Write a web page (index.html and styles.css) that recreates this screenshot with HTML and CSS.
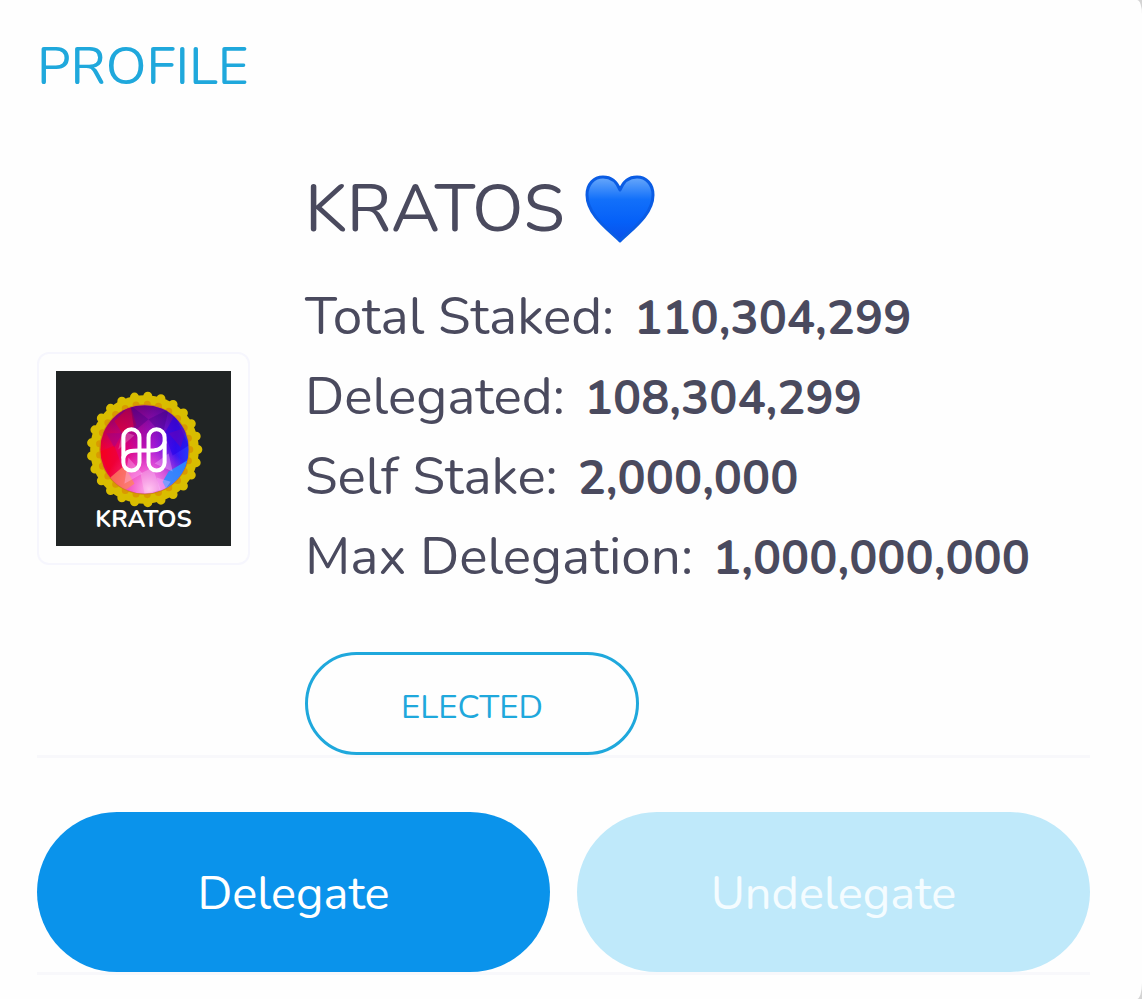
FILE: index.html
```html
<!DOCTYPE html>
<html lang="en">
<head>
    <meta charset="UTF-8">
    <meta name="viewport" content="width=device-width, initial-scale=1.0">
    <title>Validator Profile</title>
    <link rel="stylesheet" href="styles.css">
</head>
<body>
    <main class="card">
        <h2 class="card-title">PROFILE</h2>

        <section class="profile">
            <div class="avatar">
                <svg viewBox="0 0 174 174" role="img" aria-label="KRATOS logo">
                    <defs>
                        <linearGradient id="disc" x1="0" y1="0" x2="1" y2="0">
                            <stop offset="0" stop-color="#f0002c"/>
                            <stop offset="0.3" stop-color="#e00078"/>
                            <stop offset="0.6" stop-color="#a818d8"/>
                            <stop offset="0.85" stop-color="#3c14f0"/>
                            <stop offset="1" stop-color="#2438ff"/>
                        </linearGradient>
                        <linearGradient id="shade" x1="0" y1="0" x2="0" y2="1">
                            <stop offset="0" stop-color="#500078" stop-opacity="0.8"/>
                            <stop offset="0.5" stop-color="#780090" stop-opacity="0"/>
                        </linearGradient>
                        <radialGradient id="glow" cx="0.55" cy="0.95" r="0.5">
                            <stop offset="0" stop-color="#ffb4ec"/>
                            <stop offset="0.5" stop-color="#ff70d8" stop-opacity="0.7"/>
                            <stop offset="1" stop-color="#ff50c8" stop-opacity="0"/>
                        </radialGradient>
                        <clipPath id="round"><circle cx="88" cy="78" r="44"/></clipPath>
                    </defs>
                    <rect width="174" height="174" fill="#202424"/>
                    <!-- scalloped seal -->
                    <circle cx="88" cy="78" r="54" fill="#d9bd00"/>
                    <circle cx="88" cy="78" r="53" fill="none" stroke="#d9bd00" stroke-width="9" stroke-linecap="round" pathLength="250" stroke-dasharray="0 10"/>
                    <circle cx="88" cy="78" r="45" fill="none" stroke="#d99a00" stroke-width="7" stroke-linecap="round" pathLength="250" stroke-dasharray="0 10"/>
                    <circle cx="88" cy="78" r="45" fill="#d08a10"/>
                    <g clip-path="url(#round)">
                        <rect x="44" y="34" width="88" height="88" fill="url(#disc)"/>
                        <rect x="44" y="34" width="88" height="88" fill="url(#shade)"/>
                        <rect x="44" y="34" width="88" height="88" fill="url(#glow)"/>
                        <path d="M44 80l14-6 8 22-12 10zM58 50l16-16 6 20-14 8z" fill="#ff0000" fill-opacity="0.35"/>
                        <path d="M54 106l14-12 10 18-14 10z" fill="#ff8a50" fill-opacity="0.7"/>
                        <path d="M112 100l20-12v24l-20 10-6-12z" fill="#2c8cff" fill-opacity="0.9"/>
                        <path d="M118 44l14 30-16 10-8-22z" fill="#2000e8" fill-opacity="0.5"/>
                        <path d="M74 34l18 14-14 12zM92 48l20-10-6 26z" fill="#380080" fill-opacity="0.35"/>
                        <path d="M84 102l12-6 8 22-16 4zM66 60l12 4-16 14z" fill="#ffffff" fill-opacity="0.22"/>
                        <path d="M72 86l14 16-18 10zM98 92l14-10 4 18zM100 106l14 4-10 14z" fill="#ffc0ff" fill-opacity="0.35"/>
                        <path d="M50 62l16 0-8 14zM112 62l18-6-6 20z" fill="#8800a0" fill-opacity="0.35"/>
                    </g>
                    <g fill="none" stroke="#ffffff" stroke-width="4" stroke-linecap="round">
                        <rect x="67" y="58" width="16" height="41" rx="8"/>
                        <rect x="92" y="58" width="16" height="41" rx="8"/>
                        <path d="M67 86C70 78 77 79 87 79S105 80 108 71"/>
                    </g>
                    <text class="avatar-text" x="87" y="155" text-anchor="middle">KRATOS</text>
                </svg>
            </div>

            <div class="details">
                <h1 class="name">
                    KRATOS
                    <svg class="heart" viewBox="0 0 70 68" aria-hidden="true">
                        <defs>
                            <linearGradient id="heart-fill" x1="0" y1="0" x2="0" y2="1">
                                <stop offset="0" stop-color="#69a8fa"/>
                                <stop offset="0.35" stop-color="#1270fa"/>
                                <stop offset="0.7" stop-color="#0560f8"/>
                                <stop offset="1" stop-color="#0a50e8"/>
                            </linearGradient>
                        </defs>
                        <path d="M35 66C24 55 2 40 2 20 2 9 9 2 18 2c8 0 14 5 17 13C38 7 44 2 52 2c9 0 16 7 16 18C68 40 46 55 35 66z" fill="url(#heart-fill)" stroke="#0a5ce4" stroke-width="3" stroke-linejoin="round"/>
                    </svg>
                </h1>
                <dl class="stats">
                    <div class="stat"><dt>Total Staked:</dt><dd>110,304,299</dd></div>
                    <div class="stat"><dt>Delegated:</dt><dd>108,304,299</dd></div>
                    <div class="stat"><dt>Self Stake:</dt><dd>2,000,000</dd></div>
                    <div class="stat"><dt>Max Delegation:</dt><dd>1,000,000,000</dd></div>
                </dl>
                <span class="badge">ELECTED</span>
            </div>
        </section>

        <div class="actions">
            <button class="btn" type="button">Delegate</button>
            <button class="btn" type="button" disabled>Undelegate</button>
        </div>
    </main>
</body>
</html>
```
FILE: styles.css
```css
:root {
    --text: #4a4a5e;
    --accent: #1fa8dc;
    --line: #f8f8fb;
    --primary: #0a93eb;
    --disabled: #bfe9fa;
}

* {
    box-sizing: border-box;
}

body {
    margin: 0;
    background: #d4d4d4;
    color: var(--text);
    font-family: Nunito, Lato, sans-serif;
}

.card {
    min-height: 100vh;
    padding: 33px 52px 24px 37px;
    background: #fefefe;
    border-radius: 0 5px 5px 0 / 0 14px 16px 0;
}

.card-title {
    margin: 0 0 60px;
    color: var(--accent);
    font-size: 53px;
    font-weight: 400;
    line-height: 68px;
}

.profile {
    display: flex;
    align-items: center;
    gap: 55px;
    border-bottom: 3px solid var(--line);
}

.avatar {
    flex: none;
    width: 213px;
    padding: 17px;
    border: 2px solid #f6f6fd;
    border-radius: 12px;
}

.avatar svg {
    display: block;
    width: 100%;
}

.avatar-text {
    fill: #ffffff;
    font-size: 24px;
    font-weight: 700;
}

.details {
    flex: 1;
}

.name {
    display: flex;
    align-items: center;
    gap: 20px;
    margin: 0 0 20px;
    font-size: 67px;
    font-weight: 400;
    line-height: 96px;
}

.heart {
    width: 70px;
}

.stats {
    margin: 0 0 55px;
    line-height: 80px;
}

.stat {
    display: flex;
    align-items: baseline;
    gap: 20px;
    height: 80px;
}

.stat dt {
    font-size: 53px;
}

.stat dd {
    margin: 0;
    font-size: 47px;
    font-weight: 700;
}

.badge {
    display: block;
    width: 334px;
    padding: 9px 0 0;
    border: 3px solid var(--accent);
    border-radius: 52px;
    color: var(--accent);
    font-size: 33px;
    line-height: 88px;
    text-align: center;
}

.actions {
    display: grid;
    grid-template-columns: 1fr 1fr;
    gap: 27px;
    padding-top: 54px;
    border-bottom: 3px solid var(--line);
}

.btn {
    height: 160px;
    padding: 2px 0 0;
    border: 0;
    border-radius: 80px;
    background: var(--primary);
    color: #ffffff;
    font-family: inherit;
    font-size: 47px;
    cursor: pointer;
}

.btn:disabled {
    background: var(--disabled);
    color: #f4fcff;
    cursor: default;
}
```
